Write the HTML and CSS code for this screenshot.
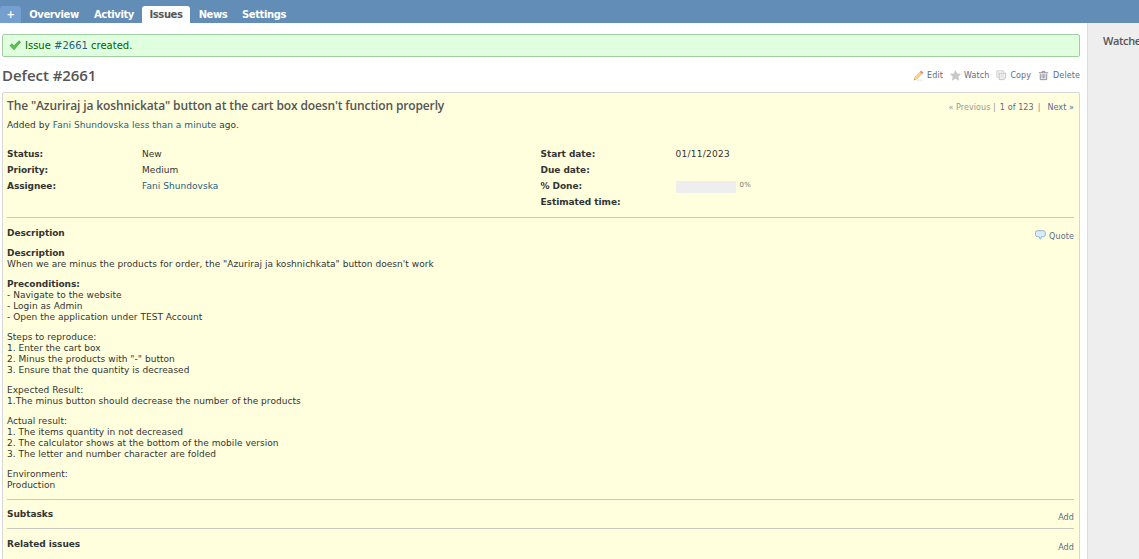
FILE: index.html
```html
<!DOCTYPE html>
<html lang="en">
<head>
<meta charset="utf-8">
<title>Defect #2661</title>
<link rel="stylesheet" href="styles.css">
</head>
<body>
<nav class="menu">
  <a class="tab tab-new">+</a><a class="tab tab-overview">Overview</a><a class="tab tab-activity">Activity</a><a class="tab tab-issues selected">Issues</a><a class="tab tab-news">News</a><a class="tab tab-settings">Settings</a>
</nav>
<div class="main">
  <main class="content">
    <div class="flash">
      <svg class="check" width="12" height="11" viewBox="0 0 12 11"><path d="M1 5.5 3 3.8 4.8 6 10 .8 11.5 2 5 9.8Z" fill="#5fbf4f" stroke="#4aa548" stroke-width=".8"/></svg>
      <span>Issue <a class="link">#2661</a> created.</span>
    </div>
    <header class="title-row">
      <h2><span>Defect #2661</span></h2>
      <div class="actions">
        <a class="action edit"><svg width="11" height="11" viewBox="0 0 12 12"><path d="M1 11 2 8 8.3 1.8 10.3 3.7 4 10Z" fill="#f8d389" stroke="#e8c27c" stroke-width=".8"/><path d="m8 2 1-1 2 2-1 1Z" fill="#df7777" stroke="#d58484" stroke-width=".6"/><path d="m1 11 .5-1.400L2.500 10.500Z" fill="#999"/><path d="M4 11h6" stroke="#ddd"/></svg><span>Edit</span></a>
        <a class="action watch"><svg width="11" height="11" viewBox="0 0 12 12"><path d="m6 .7 1.600 3.500 3.900.4-2.900 2.600.8 3.900L6 9.100l-3.400 2 .8-3.900L.5 4.600l3.900-.4Z" fill="#c9c9c9" stroke="#bdbdbd" stroke-width=".6"/></svg><span>Watch</span></a>
        <a class="action copy"><svg width="11" height="11" viewBox="0 0 12 12"><path d="M1 1h7v2M1 1v7h2M2.500 3h1M2.500 5h1" fill="none" stroke="#c6c6c6"/><path d="M3.500 3.500h7v5l-2 2h-5Z" fill="#f5f5f5" stroke="#bcbcbc"/><path d="M5 5.500h4M5 7.500h3M8.500 10.500v-2h2" fill="none" stroke="#cdcdcd" stroke-width=".8"/></svg><span>Copy</span></a>
        <a class="action delete"><svg width="11" height="11" viewBox="0 0 12 12"><path d="M1 3h10M4.500 3V1.500h3V3M2.500 4v6.500h7V4" fill="#eee" stroke="#8b8b98"/><path d="M4.500 4.500v4.500M6 4.500v4.500M7.500 4.500v4.500" stroke="#8b8b98" stroke-width=".8"/></svg><span>Delete</span></a>
      </div>
    </header>
    <article class="issue">
      <div class="subject-row">
        <h3><span>The "Azuriraj ja koshnickata" button at the cart box doesn't function properly</span></h3>
        <div class="pager"><span class="prev">« Previous |</span><span class="pos">1 of 123</span><span class="bar">|</span><a>Next »</a></div>
      </div>
      <p class="author">Added by <a class="link">Fani Shundovska</a> <a class="link">less than a minute</a> ago.</p>
      <div class="attributes">
        <dl>
          <dt>Status:</dt><dd>New</dd>
          <dt>Priority:</dt><dd>Medium</dd>
          <dt>Assignee:</dt><dd><a class="link">Fani Shundovska</a></dd>
        </dl>
        <dl>
          <dt>Start date:</dt><dd class="date">01/11/2023</dd>
          <dt>Due date:</dt><dd></dd>
          <dt>% Done:</dt><dd class="done"><span class="progress"></span><span class="percent">0%</span></dd>
          <dt>Estimated time:</dt><dd></dd>
        </dl>
      </div>
      <section class="description">
        <div class="section-head"><strong>Description</strong><a class="quote"><svg width="11" height="10" viewBox="0 0 11 10"><path d="M2.500.7h5.800q2 0 2 2v2q0 2-2 2H6.500L5.300 9.300 4.200 6.700H2.500q-2 0-2-2v-2q0-2 2-2Z" fill="#d9edf9" stroke="#8fb2ce"/></svg><span>Quote</span></a></div>
        <div class="wiki">
          <p><strong>Description</strong><br>When we are minus the products for order, the "Azuriraj ja koshnichkata" button doesn't work</p>
          <p><strong>Preconditions:</strong><br>- Navigate to the website<br>- Login as Admin<br>- Open the application under TEST Account</p>
          <p>Steps to reproduce:<br>1. Enter the cart box<br>2. Minus the products with "-" button<br>3. Ensure that the quantity is decreased</p>
          <p>Expected Result:<br>1.The minus button should decrease the number of the products</p>
          <p>Actual result:<br>1. The items quantity in not decreased<br>2. The calculator shows at the bottom of the mobile version<br>3. The letter and number character are folded</p>
          <p>Environment:<br>Production</p>
        </div>
      </section>
      <section class="subtasks"><div class="section-head"><strong>Subtasks</strong><a>Add</a></div></section>
      <section class="related"><div class="section-head"><strong>Related issues</strong><a>Add</a></div></section>
    </article>
  </main>
  <aside class="sidebar"><h3><span>Watche</span></h3></aside>
</div>
</body>
</html>
```
FILE: styles.css
```css
* { box-sizing: border-box; }
body { margin: 0; height: 559px; overflow: hidden; background: #fff; color: #333; font: 9px/11px "DejaVu Sans", Verdana, sans-serif; letter-spacing: .035px; }
h2, h3, p, dl, dd { margin: 0; }
strong, dt { font-weight: bold; letter-spacing: -.05px; }
.link { color: #2a5c80; }
.menu { height: 23px; background: #628db6; display: flex; align-items: flex-end; }
.tab { height: 17px; line-height: 18px; color: #fff; font-size: 10px; font-weight: bold; text-align: center; letter-spacing: -.4px; border-radius: 3px 3px 0 0; white-space: nowrap; }
.tab-new { width: 21px; background: #759fcf; }
.tab-overview { width: 66px; }
.tab-activity { width: 54px; margin-right: 1px; }
.tab-issues { width: 48px; }
.tab-news { width: 46px; }
.tab-settings { width: 56px; }
.selected { background: #fff; color: #555; }
.main { display: flex; height: 536px; }
.content { width: 1087px; flex: none; padding: 11px 7px 0 2px; }
.sidebar { flex: 1; overflow: hidden; background: #eee; border-left: 1px solid #ddd; padding: 9px 0 0 15px; }
h2, h3 { font-family: "Open Sans", sans-serif; color: #555; font-weight: 600; white-space: nowrap; letter-spacing: 0; }
.sidebar h3 { font-size: 11px; line-height: 18px; letter-spacing: -.35px; }
.flash { height: 23px; display: flex; align-items: center; gap: 4px; padding-left: 6px; background: #dfffdf; border: 1px solid #9fcf9f; border-radius: 2px; color: #005f00; font-size: 10px; letter-spacing: 0; }
.title-row { height: 35px; display: flex; justify-content: space-between; align-items: center; padding-top: 2px; }
h2 { font-size: 15px; line-height: 20px; margin-top: -2px; letter-spacing: -.05px; }
.actions { display: flex; color: #5a6a8c; font-size: 8px; letter-spacing: .1px; }
.action { display: flex; align-items: center; gap: 3px; margin-left: 7px; white-space: nowrap; }
.delete { gap: 4px; }
.issue { height: 480px; background: #ffffdd; border: 1px solid #d7d7d7; border-radius: 2px; padding: 4px 5px 0 4px; }
.subject-row { height: 18px; display: flex; justify-content: space-between; align-items: center; }
.subject-row h3 { font-size: 12px; line-height: 18px; letter-spacing: -.13px; }
.pager { display: flex; gap: 4px; font-size: 8px; color: #5a6a8c; padding-top: 2px; white-space: nowrap; letter-spacing: .08px; }
.prev { color: #999; }
.bar { margin-right: 3px; color: #888; }
.author { margin-top: 4px; line-height: 12px; letter-spacing: .04px; }
.attributes { display: grid; grid-template-columns: 1fr 1fr; height: 87px; padding-top: 15px; border-bottom: 1px solid #c8c8c0; }
dl { display: grid; grid-template-columns: 135px 1fr; grid-auto-rows: 16px; line-height: 16px; }
dd { letter-spacing: .05px; }
.date { letter-spacing: .25px; }
.done { display: flex; align-items: center; gap: 4px; padding-top: 2px; }
.progress { width: 60px; height: 12px; background: #eee; }
.percent { font-size: 7px; line-height: 10px; color: #777; padding-bottom: 4px; letter-spacing: .3px; }
.section-head { height: 20px; line-height: 13px; display: flex; justify-content: space-between; }
.section-head a { color: #5a6a8c; font-size: 8px; letter-spacing: .12px; }
.section-head > a { padding-top: 3px; }
.description { height: 282px; padding-top: 9px; border-bottom: 1px solid #c8c8c0; }
.description .section-head { height: 21px; }
.quote { display: flex; gap: 3px; }
.wiki p { margin-bottom: 9px; }
.subtasks { height: 29px; padding-top: 8px; border-bottom: 1px solid #c8c8c0; }
.related { padding-top: 9px; }
```
